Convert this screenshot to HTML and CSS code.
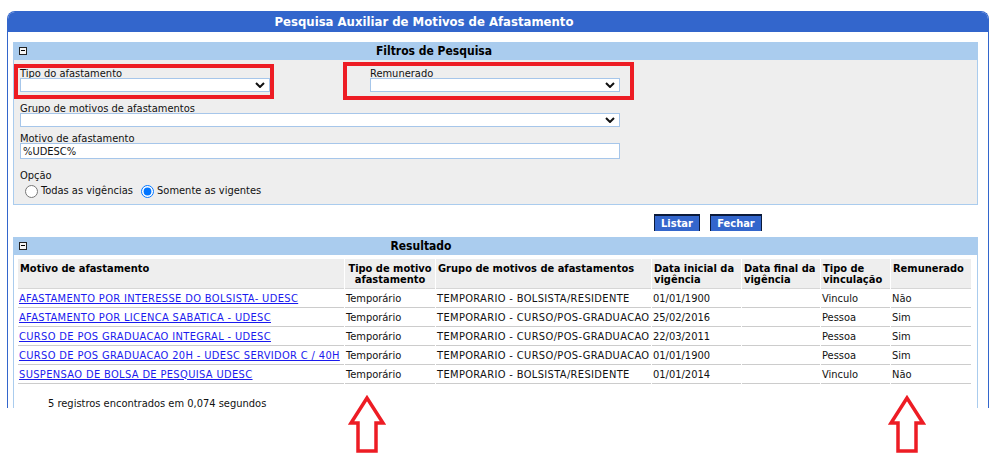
FILE: index.html
```html
<!DOCTYPE html>
<html lang="pt-BR">
<head>
<meta charset="utf-8">
<title>Pesquisa Auxiliar de Motivos de Afastamento</title>
<link rel="stylesheet" href="styles.css">
</head>
<body>
<div class="page">
  <div class="panel">
    <div class="panel-title"><span>Pesquisa Auxiliar de Motivos de Afastamento</span></div>
    <div class="panel-body">
      <div class="section-bar bar-filtros">
        <span class="toggle"><span class="toggle-minus"></span></span>
        <span class="bar-title">Filtros de Pesquisa</span>
      </div>
      <div class="filters">
        <div class="row-pair">
          <div class="field field-half">
            <label class="field-label">Tipo do afastamento</label>
            <div class="select-box">
              <svg class="chev" width="10" height="6" viewBox="0 0 10 6"><path d="M1 1 L5 5 L9 1" fill="none" stroke="#111" stroke-width="2"/></svg>
            </div>
          </div>
          <div class="field field-half field-rem">
            <label class="field-label">Remunerado</label>
            <div class="select-box">
              <svg class="chev" width="10" height="6" viewBox="0 0 10 6"><path d="M1 1 L5 5 L9 1" fill="none" stroke="#111" stroke-width="2"/></svg>
            </div>
          </div>
        </div>
        <div class="field field-full field-grupo">
          <label class="field-label">Grupo de motivos de afastamentos</label>
          <div class="select-box">
            <svg class="chev" width="10" height="6" viewBox="0 0 10 6"><path d="M1 1 L5 5 L9 1" fill="none" stroke="#111" stroke-width="2"/></svg>
          </div>
        </div>
        <div class="field field-full field-motivo">
          <label class="field-label">Motivo de afastamento</label>
          <div class="text-input">%UDESC%</div>
        </div>
        <div class="field field-opcao">
          <label class="field-label">Opção</label>
          <div class="radio-row">
            <label class="radio"><input type="radio" name="op">Todas as vigências </label>
            <label class="radio"><input type="radio" name="op" checked>Somente as vigentes</label>
          </div>
        </div>
        <span class="red-box red-box-1"></span>
        <span class="red-box red-box-2"></span>
      </div>
      <div class="actions">
        <button class="btn btn-listar">Listar</button>
        <button class="btn btn-fechar">Fechar</button>
      </div>
      <div class="section-bar bar-result">
        <span class="toggle"><span class="toggle-minus"></span></span>
        <span class="bar-title">Resultado</span>
      </div>
      <div class="results">
        <table class="grid">
          <thead>
            <tr>
              <th class="c1">Motivo de afastamento</th>
              <th class="c2 center">Tipo de motivo afastamento</th>
              <th class="c3">Grupo de motivos de afastamentos</th>
              <th class="c4">Data inicial da vigência</th>
              <th class="c5">Data final da vigência</th>
              <th class="c6">Tipo de vinculação</th>
              <th class="c7">Remunerado</th>
            </tr>
          </thead>
          <tbody>
            <tr><td class="caps"><a href="#">AFASTAMENTO POR INTERESSE DO BOLSISTA- UDESC</a></td><td>Temporário</td><td class="caps">TEMPORARIO - BOLSISTA/RESIDENTE</td><td>01/01/1900</td><td></td><td>Vinculo</td><td>Não</td></tr>
            <tr><td class="caps"><a href="#">AFASTAMENTO POR LICENCA SABATICA - UDESC</a></td><td>Temporário</td><td class="caps">TEMPORARIO - CURSO/POS-GRADUACAO</td><td>25/02/2016</td><td></td><td>Pessoa</td><td>Sim</td></tr>
            <tr><td class="caps"><a href="#">CURSO DE POS GRADUACAO INTEGRAL - UDESC</a></td><td>Temporário</td><td class="caps">TEMPORARIO - CURSO/POS-GRADUACAO</td><td>22/03/2011</td><td></td><td>Pessoa</td><td>Sim</td></tr>
            <tr><td class="caps"><a href="#">CURSO DE POS GRADUACAO 20H - UDESC SERVIDOR C / 40H</a></td><td>Temporário</td><td class="caps">TEMPORARIO - CURSO/POS-GRADUACAO</td><td>01/01/1900</td><td></td><td>Pessoa</td><td>Sim</td></tr>
            <tr><td class="caps"><a href="#">SUSPENSAO DE BOLSA DE PESQUISA UDESC</a></td><td>Temporário</td><td class="caps">TEMPORARIO - BOLSISTA/RESIDENTE</td><td>01/01/2014</td><td></td><td>Vinculo</td><td>Não</td></tr>
          </tbody>
        </table>
        <div class="count">5 registros encontrados em 0,074 segundos</div>
      </div>
    </div>
  </div>
  <svg class="arrow arrow-1" width="40" height="60" viewBox="0 0 40 60"><path d="M19 3 L3 28 L10 28 L10 56 L28 56 L28 28 L35 28 Z" fill="#fff" stroke="#ED1C24" stroke-width="3.5" stroke-linejoin="miter"/></svg>
  <svg class="arrow arrow-2" width="40" height="60" viewBox="0 0 40 60"><path d="M19 3 L3 28 L10 28 L10 56 L28 56 L28 28 L35 28 Z" fill="#fff" stroke="#ED1C24" stroke-width="3.5" stroke-linejoin="miter"/></svg>
</div>
</body>
</html>
```
FILE: styles.css
```css
* { box-sizing: border-box; }

body {
  margin: 0;
  background: #ffffff;
  font-family: "DejaVu Sans Condensed", "DejaVu Sans", Verdana, sans-serif;
  font-size: 11px;
  color: #000;
}

.page {
  position: relative;
  width: 996px;
  height: 469px;
  overflow: hidden;
  padding: 11px 0 0 7px;
}

.panel {
  width: 982px;
  height: 397px;
  border: 1px solid #3366cc;
  border-bottom: none;
  border-radius: 8px 8px 0 0;
}

.panel-title {
  height: 20px;
  background: #3366cc;
  border-radius: 7px 7px 0 0;
  color: #fff;
  font-weight: bold;
  font-size: 13px;
  display: flex;
  align-items: center;
  justify-content: center;
  padding-right: 148px;
  padding-bottom: 1px;
}

.panel-body {
  padding: 10px 10px 0 5px;
}

.section-bar {
  height: 18px;
  background: #aaccee;
  display: flex;
  align-items: center;
  position: relative;
}

.toggle {
  position: absolute;
  left: 6px;
  top: 5px;
  width: 8px;
  height: 8px;
  border: 1px solid #222;
  background: #f4f4f4;
}

.toggle-minus {
  position: absolute;
  left: 1px;
  top: 2px;
  width: 4px;
  height: 1px;
  background: #000;
}

.bar-title {
  flex: 1;
  text-align: center;
  font-weight: bold;
  font-size: 12px;
  color: #000;
}

.bar-filtros .bar-title { padding-right: 123px; }
.bar-result .bar-title { padding-right: 149px; }

.filters {
  position: relative;
  height: 145px;
  background: #eeeeee;
  border: 1px solid #aaccee;
  border-top: none;
  padding: 5px 0 0 6px;
}

.row-pair {
  display: flex;
  gap: 100px;
}

.field-half { width: 250px; }
.field-full { width: 600px; }
.field-grupo { margin-top: 8px; }
.field-motivo { margin-top: 3px; }
.field-opcao { margin-top: 8px; }

.field-label {
  display: block;
  height: 13px;
  line-height: 17px;
  color: #111;
}

.select-box {
  position: relative;
  height: 14px;
  background: #fff;
  border: 1px solid #a6c6ea;
}

.chev {
  position: absolute;
  right: 4px;
  top: 3px;
}

.text-input {
  height: 16px;
  background: #fff;
  border: 1px solid #a6c6ea;
  padding-left: 2px;
  line-height: 15px;
  color: #111;
}

.radio-row {
  display: flex;
  align-items: center;
  height: 20px;
}

.radio {
  display: flex;
  align-items: center;
  white-space: pre;
  color: #111;
  padding-top: 1px;
}

.radio input {
  margin: 1px 3px 0 5px;
  width: 13px;
  height: 13px;
  accent-color: #0075ff;
}

.red-box {
  position: absolute;
  border: 4px solid #ed1c24;
}

.red-box-1 { left: 0; top: 4px; width: 260px; height: 35px; }
.red-box-2 { left: 329px; top: 2px; width: 291px; height: 38px; }

.actions {
  display: flex;
  gap: 10px;
  padding: 9px 0 6px 641px;
  height: 32px;
}

.btn {
  height: 17px;
  padding: 0;
  background: #3366cc;
  color: #fff;
  font-family: inherit;
  font-weight: bold;
  font-size: 11px;
  border: 1px solid #0b1a3a;
  border-top-width: 2px;
  border-bottom: none;
  line-height: 14px;
}

.btn-listar { width: 46px; }
.btn-fechar { width: 52px; }

.results {
  height: 153px;
  border: 1px solid #aaccee;
  border-top: none;
  border-bottom: none;
  padding: 4px 0 0 3px;
}

.grid {
  table-layout: fixed;
  width: 955px;
  border-collapse: separate;
  border-spacing: 1px 0;
}

.grid th, .grid td {
  box-sizing: border-box;
  white-space: nowrap;
  overflow: hidden;
  text-align: left;
}

.grid th {
  height: 30px;
  background: #eeeeee;
  border-bottom: 1px solid #d6d6d6;
  font-weight: bold;
  vertical-align: top;
  padding: 4px 2px 0 2px;
  line-height: 11px;
  white-space: normal;
}

.grid th.center { text-align: center; }

.grid td {
  height: 19px;
  border-bottom: 1px solid #cccccc;
  padding: 0 1px 0 1px;
  vertical-align: middle;
  color: #111;
}

.grid td.caps { letter-spacing: 0.35px; }

.grid a { color: #1a1aee; }

.c1 { width: 326px; }
.c2 { width: 90px; }
.c3 { width: 215px; }
.c4 { width: 89px; }
.c5 { width: 78px; }
.c6 { width: 69px; }
.c7 { width: 80px; }

.count {
  padding: 13px 0 0 31px;
  line-height: 13px;
  color: #111;
}

.arrow { position: absolute; }
.arrow-1 { left: 348px; top: 395px; }
.arrow-2 { left: 888px; top: 395px; }
```
